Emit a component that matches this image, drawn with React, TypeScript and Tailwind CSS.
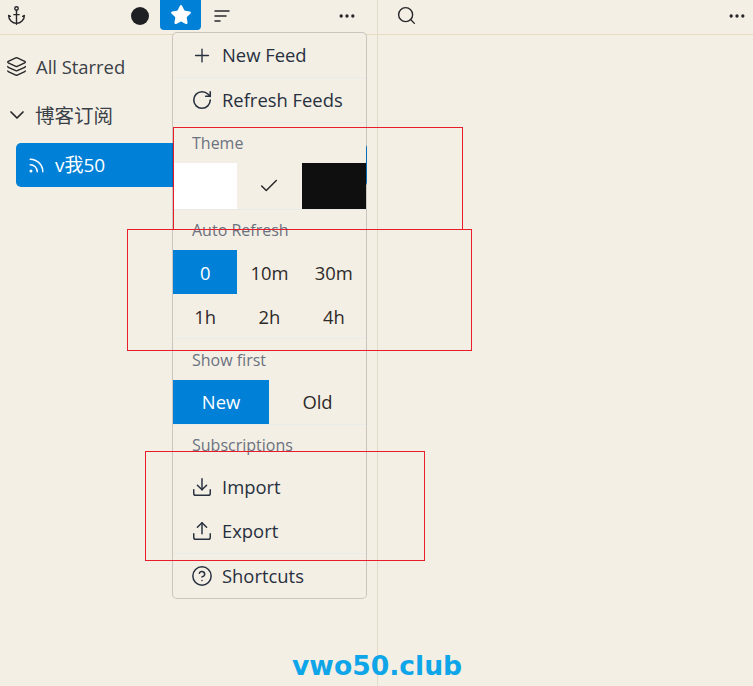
import {
  Anchor,
  Check,
  ChevronDown,
  CircleHelp,
  Download,
  Ellipsis,
  Layers,
  Plus,
  RotateCw,
  Rss,
  Search,
  Star,
  Upload,
} from 'lucide-react'
import type { ReactNode } from 'react'

const FONT = "font-['Open_Sans','Noto_Sans_CJK_SC',sans-serif]"

function SortIcon() {
  return (
    <svg width="16" height="14" viewBox="0 0 16 14" fill="none" stroke="#27272a" strokeWidth="1.5" strokeLinecap="round">
      <path d="M1 2h14M1 7h11M1 12h5" />
    </svg>
  )
}

function MenuItem({ icon, label }: { icon: ReactNode; label: string }) {
  return (
    <div className="flex h-11 items-center pl-[18px] text-[18.4px] text-[#27303f]">
      <span className="flex w-[22px] justify-center">{icon}</span>
      <span className="ml-[9px]">{label}</span>
    </div>
  )
}

function Label({ children, className }: { children: string; className: string }) {
  return (
    <div className={`flex items-center pl-[19px] text-[16px] text-[#6b7280] ${className}`}>
      {children}
    </div>
  )
}

function Cell({ children, active, className = 'pt-[2px]' }: { children: string; active?: boolean; className?: string }) {
  return (
    <div
      className={`flex h-11 items-center justify-center text-[18.4px] ${className} ${
        active ? 'bg-[#0080d6] text-white' : 'text-[#2d2a2a]'
      }`}
    >
      {children}
    </div>
  )
}

function Menu() {
  return (
    <div className="absolute top-8 left-[172px] w-[195px] rounded-[5px] border border-[#0000002b] bg-[#f4efe4] bg-clip-padding">
      <MenuItem icon={<Plus size={23} strokeWidth={1.5} />} label="New Feed" />
      <div className="h-px bg-[#e9ebe9]" />
      <MenuItem icon={<RotateCw size={22} strokeWidth={1.7} />} label="Refresh Feeds" />
      <div className="h-px bg-[#e9ebe9]" />

      <Label className="h-10">Theme</Label>
      <div className="grid h-[46px] grid-cols-3">
        <div className="bg-white" />
        <div className="flex items-center justify-center text-[#27272a]">
          <Check size={22} strokeWidth={1.6} />
        </div>
        <div className="bg-[#0f0f0f]" />
      </div>
      <div className="h-px bg-[#e9ebe9]" />

      <Label className="h-10">Auto Refresh</Label>
      <div className="grid grid-cols-3">
        <Cell active>0</Cell>
        <Cell>10m</Cell>
        <Cell>30m</Cell>
        <Cell>1h</Cell>
        <Cell>2h</Cell>
        <Cell>4h</Cell>
      </div>
      <div className="h-px bg-[#e9ebe9]" />

      <Label className="h-[41px]">Show first</Label>
      <div className="grid grid-cols-[96px_1fr]">
        <Cell active className="pt-0">New</Cell>
        <Cell className="pt-0">Old</Cell>
      </div>
      <div className="h-px bg-[#e9ebe9]" />

      <Label className="h-10">Subscriptions</Label>
      <MenuItem icon={<Download size={22} strokeWidth={1.6} />} label="Import" />
      <MenuItem icon={<Upload size={22} strokeWidth={1.6} />} label="Export" />
      <div className="h-px bg-[#e9ebe9]" />
      <MenuItem icon={<CircleHelp size={22} strokeWidth={1.6} />} label="Shortcuts" />
    </div>
  )
}

export default function App() {
  return (
    <div className={`relative flex h-[686px] w-[753px] overflow-hidden bg-[#f4efe4] ${FONT}`}>
      <div className="flex w-[378px] shrink-0 flex-col border-r border-[#e0dcc8]">
        <div className="flex h-[35px] shrink-0 items-center border-b border-[#e8dcc0] pr-[20px] pb-[3px] pl-[6px] text-[#27272a]">
          <Anchor size={21} strokeWidth={1.6} />
          <div className="ml-[104px] size-[18px] rounded-full bg-[#1f2023]" />
          <div className="ml-[11px] flex h-[30px] w-[41px] -translate-y-[1px] items-center justify-center rounded-b-[4px] bg-[#0080d6]">
            <Star size={22} fill="white" stroke="white" strokeWidth={1.6} />
          </div>
          <div className="ml-[13px]">
            <SortIcon />
          </div>
          <div className="ml-auto">
            <Ellipsis size={20} strokeWidth={2} />
          </div>
        </div>

        <div className="flex h-[62px] items-center gap-[9px] pt-[1px] pl-[6px] text-[18.4px] text-[#3a3f48]">
          <Layers size={21} strokeWidth={1.6} className="text-[#27272a]" />
          <span>All Starred</span>
        </div>
        <div className="flex h-[36px] items-center gap-[6px] pl-[5px] text-[19.5px] text-[#3a3f48]">
          <ChevronDown size={24} strokeWidth={1.7} className="text-[#27272a]" />
          <span className="pt-[2px]">博客订阅</span>
        </div>
        <div className="mt-[10px] ml-4 flex h-11 w-[351px] items-center gap-[9px] rounded-[5px] bg-[#0080d6] pl-[11px] text-[19px] text-white">
          <Rss size={19} strokeWidth={1.8} />
          <span>v我50</span>
        </div>
      </div>

      <div className="flex flex-1 flex-col">
        <div className="flex h-[35px] shrink-0 items-center justify-between border-b border-[#e8dcc0] pr-[6px] pb-[3px] pl-[18px] text-[#27272a]">
          <Search size={21} strokeWidth={1.6} />
          <Ellipsis size={20} strokeWidth={2} />
        </div>
      </div>

      <Menu />

      <div className="pointer-events-none absolute top-[127px] left-[173px] h-[103px] w-[290px] border border-[#e81c2a]" />
      <div className="pointer-events-none absolute top-[229px] left-[127px] h-[122px] w-[345px] border border-[#e81c2a]" />
      <div className="pointer-events-none absolute top-[451px] left-[145px] h-[110px] w-[280px] border border-[#e81c2a]" />

      <div className="absolute top-[648px] left-[292px] font-['DejaVu_Sans',sans-serif] text-[26.6px] leading-9 font-bold text-[#0ea5e9]">
        vwo50.club
      </div>
    </div>
  )
}
